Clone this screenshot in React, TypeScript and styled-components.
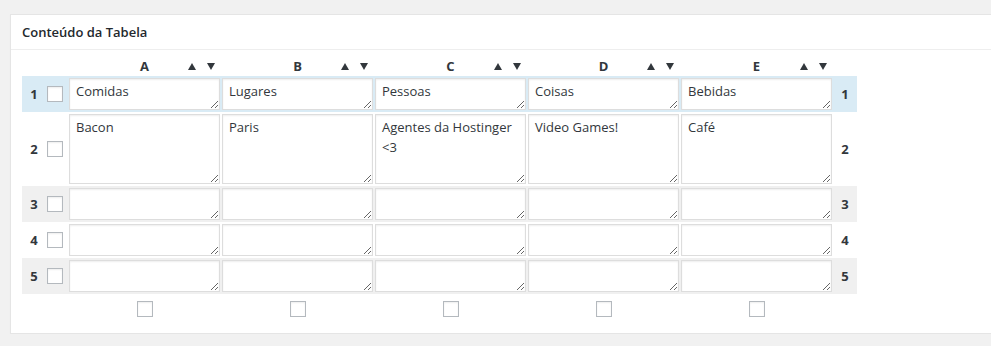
import React from 'react';
import styled, {createGlobalStyle} from 'styled-components';

const GlobalStyle = createGlobalStyle`
    html, body {
        margin: 0;
        padding: 0;
        background: #f1f1f1;
        overflow: hidden;
    }
    body {
        padding: 14px 0 0 10px;
        font-family: "Open Sans", "Noto Sans", Arial, sans-serif;
        color: #32373c;
    }
`;

const columns = ['A', 'B', 'C', 'D', 'E'];

const rows:Array<{cells:string[]; tall?:boolean}> = [
    {cells: ['Comidas', 'Lugares', 'Pessoas', 'Coisas', 'Bebidas']},
    {cells: ['Bacon', 'Paris', 'Agentes da Hostinger\n<3', 'Video Games!', 'Café'], tall: true},
    {cells: ['', '', '', '', '']},
    {cells: ['', '', '', '', '']},
    {cells: ['', '', '', '', '']},
];

type Band = 'active' | 'odd' | 'even';

const Panel = styled.div`
    width: 1000px;
    background: #fff;
    border: 1px solid #e5e5e5;
    box-shadow: 0 1px 1px rgba(0, 0, 0, .04);
`;

const PanelHeader = styled.h2`
    margin: 0;
    height: 34px;
    padding: 0 11px;
    display: flex;
    align-items: center;
    border-bottom: 1px solid #eee;
    font-size: 13px;
    font-weight: 600;
    color: #23282d;
`;

const Inside = styled.div`
    padding: 6px 11px 16px;
`;

const Table = styled.table`
    width: 835px;
    border-collapse: collapse;
    border-spacing: 0;
    table-layout: fixed;

    th, td {
        box-sizing: border-box;
    }
`;

const Col = styled.col<{$w:number}>`
    width: ${(p) => p.$w}px;
`;

const HeadCell = styled.th`
    height: 20px;
    padding: 0;
`;

const HeadInner = styled.div`
    display: grid;
    grid-template-columns: 1fr auto 1fr;
    align-items: center;
    padding: 0 6px;
`;

const ColLetter = styled.span`
    grid-column: 2;
    font-size: 13px;
    font-weight: 700;
    color: #32373c;
    line-height: 20px;
`;

const Sorters = styled.span`
    grid-column: 3;
    justify-self: end;
    display: flex;
    gap: 11px;
    align-items: center;
`;

const Row = styled.tr<{$band:Band}>`
    background: ${(p) => p.$band === 'active' ? '#d9ebf5' : p.$band === 'odd' ? '#f0f0f0' : 'transparent'};
`;

const NumCell = styled.td`
    padding: 0;
    text-align: center;
    vertical-align: middle;
    font-size: 13px;
    font-weight: 700;
    color: #32373c;
`;

const CheckCell = styled.td`
    padding: 0 0 0 1px;
    vertical-align: middle;
`;

const DataCell = styled.td`
    padding: 2px 1px;
    vertical-align: top;
`;

const FootCell = styled.td`
    padding: 7px 0 0;
    text-align: center;
`;

const Check = styled.input.attrs({type: 'checkbox'})`
    appearance: none;
    display: block;
    width: 16px;
    height: 16px;
    margin: 0;
    border: 1px solid #b4b9be;
    background: #fff;
    border-radius: 0;
    box-shadow: inset 0 1px 2px rgba(0, 0, 0, .07);
    box-sizing: border-box;
`;

const FootCheck = styled(Check)`
    margin: 0 auto;
`;

const Cell = styled.textarea<{$tall?:boolean}>`
    display: block;
    box-sizing: border-box;
    width: 151px;
    height: ${(p) => p.$tall ? '70px' : '32px'};
    margin: 0;
    padding: 2px 6px;
    border: 1px solid #ddd;
    border-radius: 0;
    box-shadow: inset 0 1px 2px rgba(0, 0, 0, .07);
    background: #fff;
    font-family: "Open Sans", "Noto Sans", Arial, sans-serif;
    font-size: 13px;
    line-height: 20px;
    color: #32373c;
    outline: none;
    overflow: hidden;
`;

const Arrow = ({up}:{up?:boolean}) => (
    <svg width='8' height='7' viewBox='0 0 8 7'>
        <polygon points={up ? '4,0 8,7 0,7' : '0,0 8,0 4,7'} fill='#32373c'/>
    </svg>
);

const bandOf = (index:number):Band => index === 0 ? 'active' : index % 2 === 0 ? 'odd' : 'even';

export default function App() {
    return (
        <>
            <GlobalStyle/>
            <Panel>
                <PanelHeader>Conteúdo da Tabela</PanelHeader>
                <Inside>
                    <Table>
                        <colgroup>
                            <Col $w={24}/>
                            <Col $w={22}/>
                            {columns.map((col) => <Col key={col} $w={153}/>)}
                            <Col $w={24}/>
                        </colgroup>
                        <thead>
                            <tr>
                                <HeadCell/>
                                <HeadCell/>
                                {columns.map((col) => (
                                    <HeadCell key={col}>
                                        <HeadInner>
                                            <ColLetter>{col}</ColLetter>
                                            <Sorters>
                                                <Arrow up/>
                                                <Arrow/>
                                            </Sorters>
                                        </HeadInner>
                                    </HeadCell>
                                ))}
                                <HeadCell/>
                            </tr>
                        </thead>
                        <tbody>
                            {rows.map((row, index) => (
                                <Row key={index} $band={bandOf(index)}>
                                    <NumCell>{index + 1}</NumCell>
                                    <CheckCell><Check/></CheckCell>
                                    {row.cells.map((value, idx) => (
                                        <DataCell key={idx}>
                                            <Cell $tall={row.tall} defaultValue={value}/>
                                        </DataCell>
                                    ))}
                                    <NumCell>{index + 1}</NumCell>
                                </Row>
                            ))}
                            <tr>
                                <FootCell/>
                                <FootCell/>
                                {columns.map((col) => (
                                    <FootCell key={col}><FootCheck/></FootCell>
                                ))}
                                <FootCell/>
                            </tr>
                        </tbody>
                    </Table>
                </Inside>
            </Panel>
        </>
    );
}
